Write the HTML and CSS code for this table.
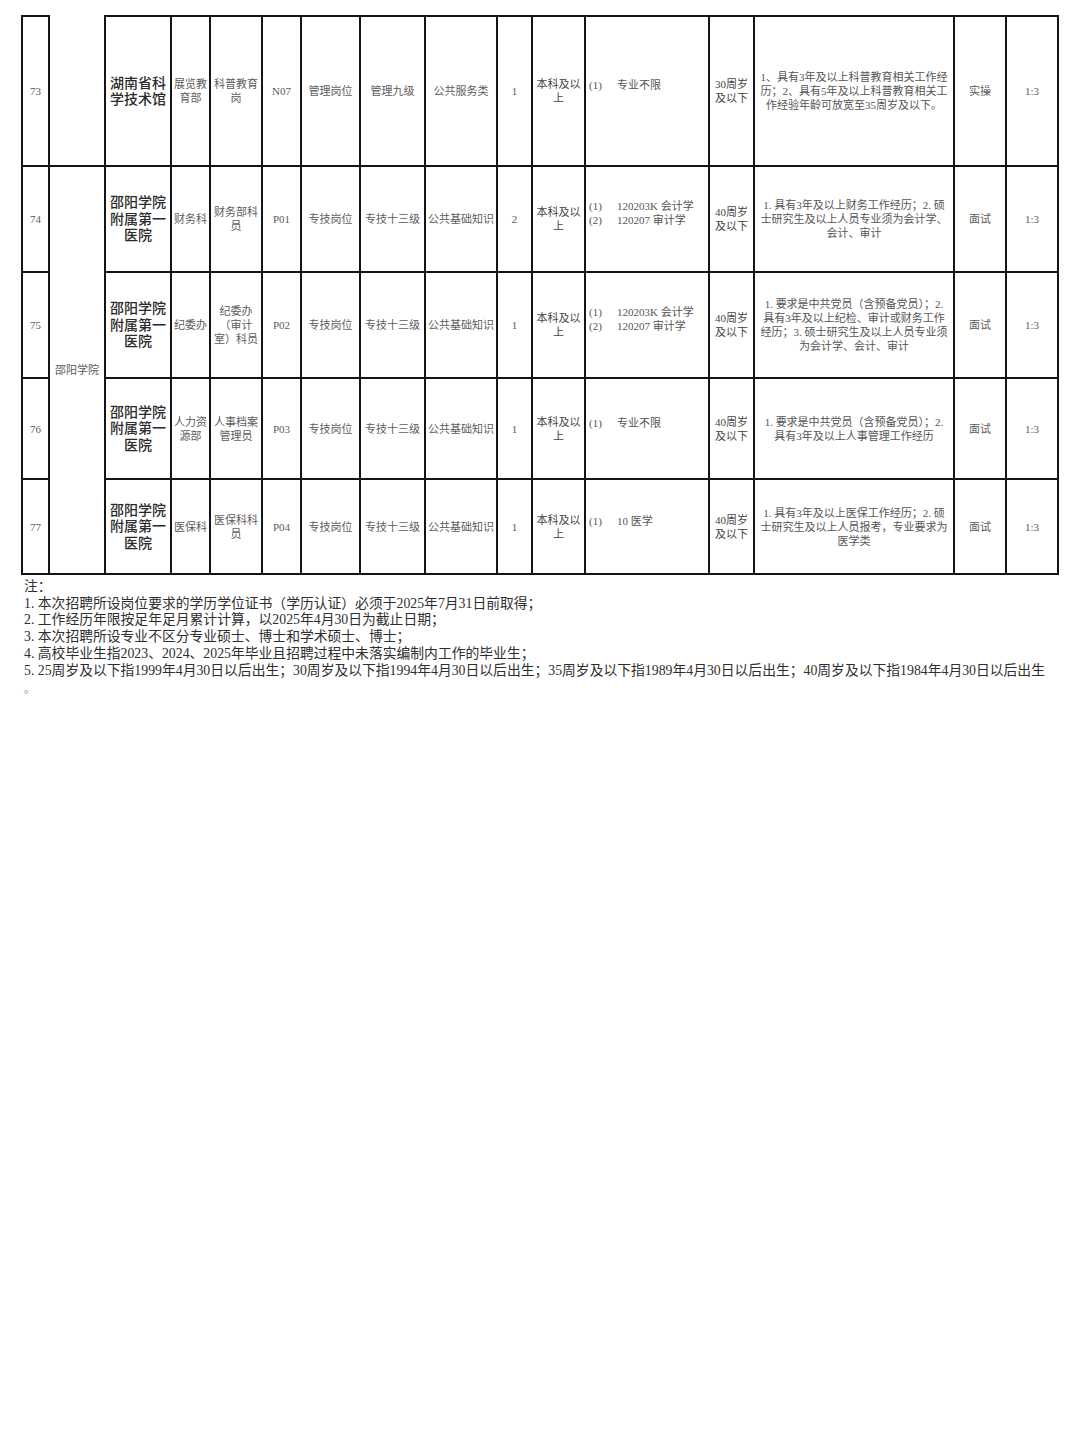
FILE: index.html
```html
<!DOCTYPE html>
<html lang="zh-CN">
<head>
<meta charset="utf-8">
<title>招聘岗位表</title>
<link rel="stylesheet" href="styles.css">
</head>
<body>
<div class="page">
  <table class="jobs">
    <colgroup>
      <col class="c1"><col class="c2"><col class="c3"><col class="c4"><col class="c5"><col class="c6"><col class="c7"><col class="c8"><col class="c9"><col class="c10"><col class="c11"><col class="c12"><col class="c13"><col class="c14"><col class="c15"><col class="c16">
    </colgroup>
    <tbody>
      <tr class="r73">
        <td>73</td>
        <td class="cont"></td>
        <td class="unit">湖南省科<br>学技术馆</td>
        <td>展览教<br>育部</td>
        <td>科普教育<br>岗</td>
        <td>N07</td>
        <td>管理岗位</td>
        <td>管理九级</td>
        <td>公共服务类</td>
        <td>1</td>
        <td class="dk">本科及以<br>上</td>
        <td class="major"><span class="idx">(1)</span>专业不限</td>
        <td class="dk">30周岁<br>及以下</td>
        <td class="req">1、具有3年及以上科普教育相关工作经<br>历；2、具有5年及以上科普教育相关工<br>作经验年龄可放宽至35周岁及以下。</td>
        <td>实操</td>
        <td>1:3</td>
      </tr>
      <tr class="r74">
        <td>74</td>
        <td rowspan="4" class="dept">邵阳学院</td>
        <td class="unit">邵阳学院<br>附属第一<br>医院</td>
        <td>财务科</td>
        <td>财务部科<br>员</td>
        <td>P01</td>
        <td>专技岗位</td>
        <td>专技十三级</td>
        <td>公共基础知识</td>
        <td>2</td>
        <td class="dk">本科及以<br>上</td>
        <td class="major"><span class="idx">(1)</span>120203K 会计学<br><span class="idx">(2)</span>120207 审计学</td>
        <td class="dk">40周岁<br>及以下</td>
        <td class="req">1. 具有3年及以上财务工作经历；2. 硕<br>士研究生及以上人员专业须为会计学、<br>会计、审计</td>
        <td>面试</td>
        <td>1:3</td>
      </tr>
      <tr class="r75">
        <td>75</td>
        <td class="unit">邵阳学院<br>附属第一<br>医院</td>
        <td>纪委办</td>
        <td>纪委办<br>（审计<br>室）科员</td>
        <td>P02</td>
        <td>专技岗位</td>
        <td>专技十三级</td>
        <td>公共基础知识</td>
        <td>1</td>
        <td class="dk">本科及以<br>上</td>
        <td class="major"><span class="idx">(1)</span>120203K 会计学<br><span class="idx">(2)</span>120207 审计学</td>
        <td class="dk">40周岁<br>及以下</td>
        <td class="req">1. 要求是中共党员（含预备党员）；2.<br>具有3年及以上纪检、审计或财务工作<br>经历；3. 硕士研究生及以上人员专业须<br>为会计学、会计、审计</td>
        <td>面试</td>
        <td>1:3</td>
      </tr>
      <tr class="r76">
        <td>76</td>
        <td class="unit">邵阳学院<br>附属第一<br>医院</td>
        <td>人力资<br>源部</td>
        <td>人事档案<br>管理员</td>
        <td>P03</td>
        <td>专技岗位</td>
        <td>专技十三级</td>
        <td>公共基础知识</td>
        <td>1</td>
        <td class="dk">本科及以<br>上</td>
        <td class="major"><span class="idx">(1)</span>专业不限</td>
        <td class="dk">40周岁<br>及以下</td>
        <td class="req">1. 要求是中共党员（含预备党员）；2.<br>具有3年及以上人事管理工作经历</td>
        <td>面试</td>
        <td>1:3</td>
      </tr>
      <tr class="r77">
        <td>77</td>
        <td class="unit">邵阳学院<br>附属第一<br>医院</td>
        <td>医保科</td>
        <td>医保科科<br>员</td>
        <td>P04</td>
        <td>专技岗位</td>
        <td>专技十三级</td>
        <td>公共基础知识</td>
        <td>1</td>
        <td class="dk">本科及以<br>上</td>
        <td class="major"><span class="idx">(1)</span>10 医学</td>
        <td class="dk">40周岁<br>及以下</td>
        <td class="req">1. 具有3年及以上医保工作经历；2. 硕<br>士研究生及以上人员报考，专业要求为<br>医学类</td>
        <td>面试</td>
        <td>1:3</td>
      </tr>
    </tbody>
  </table>
  <div class="notes">
    <p>注：</p>
    <p>1. 本次招聘所设岗位要求的学历学位证书（学历认证）必须于2025年7月31日前取得；</p>
    <p>2. 工作经历年限按足年足月累计计算，以2025年4月30日为截止日期；</p>
    <p>3. 本次招聘所设专业不区分专业硕士、博士和学术硕士、博士；</p>
    <p>4. 高校毕业生指2023、2024、2025年毕业且招聘过程中未落实编制内工作的毕业生；</p>
    <p class="nowrap">5. 25周岁及以下指1999年4月30日以后出生；30周岁及以下指1994年4月30日以后出生；35周岁及以下指1989年4月30日以后出生；40周岁及以下指1984年4月30日以后出生</p>
    <p class="dot">。</p>
  </div>
</div>
</body>
</html>
```

FILE: styles.css
```css
html, body {
  margin: 0;
  padding: 0;
  background: #ffffff;
}

.page {
  padding: 15px 0 0 21px;
  font-family: "Liberation Serif", "Noto Sans CJK SC", serif;
}

.jobs {
  border-collapse: collapse;
  table-layout: fixed;
  width: 1036px;
}

.c1 { width: 27px; }
.c2 { width: 56px; }
.c3 { width: 66px; }
.c4 { width: 39px; }
.c5 { width: 52px; }
.c6 { width: 39px; }
.c7 { width: 59px; }
.c8 { width: 65px; }
.c9 { width: 72px; }
.c10 { width: 35px; }
.c11 { width: 53px; }
.c12 { width: 124px; }
.c13 { width: 45px; }
.c14 { width: 200px; }
.c15 { width: 52px; }
.c16 { width: 52px; }

.jobs td {
  border: 2px solid #151515;
  padding: 0 1px;
  text-align: center;
  vertical-align: middle;
  font-size: 11px;
  line-height: 14px;
  color: #5c5c5c;
  white-space: nowrap;
  overflow: hidden;
}

.r73 { height: 150px; }
.r74 { height: 106px; }
.r75 { height: 106px; }
.r76 { height: 101px; }
.r77 { height: 95px; }

.jobs td.cont {
  border-top-style: hidden;
}

.jobs td.unit {
  font-family: "Liberation Sans", "Noto Sans CJK SC", sans-serif;
  font-size: 14px;
  line-height: 16.5px;
  font-weight: 500;
  color: #2a2a2a;
}

.jobs td.dept {
  color: #5c5c5c;
}

.jobs td.dk {
  color: #454545;
}

.jobs td.major {
  text-align: left;
  padding: 0 0 12px 3px;
  color: #555555;
}

.idx {
  display: inline-block;
  width: 28px;
}

.jobs td.req {
  padding: 0 2px;
  color: #555555;
}

.notes {
  margin-top: 4px;
  padding-left: 3px;
  font-size: 13.8px;
  line-height: 16.7px;
  color: #2e2e2e;
}

.notes p {
  margin: 0;
}

.notes .nowrap {
  white-space: nowrap;
}

.notes .dot {
  margin-top: 2px;
  font-size: 11px;
  color: #888888;
}
```
